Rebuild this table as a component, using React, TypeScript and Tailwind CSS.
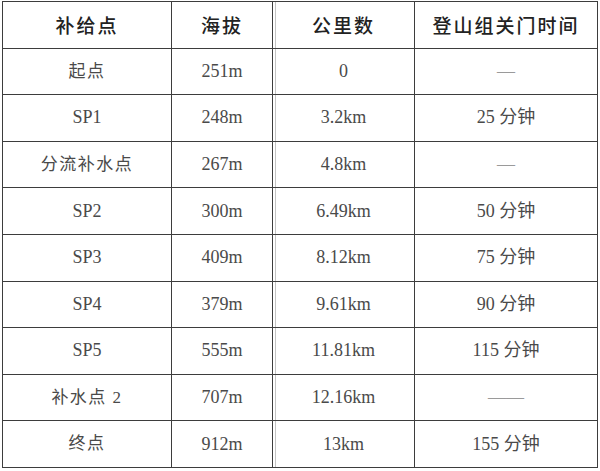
const ROWS: [string, string, string, string][] = [
  ["起点", "251m", "0", "—"],
  ["SP1", "248m", "3.2km", "25 分钟"],
  ["分流补水点", "267m", "4.8km", "—"],
  ["SP2", "300m", "6.49km", "50 分钟"],
  ["SP3", "409m", "8.12km", "75 分钟"],
  ["SP4", "379m", "9.61km", "90 分钟"],
  ["SP5", "555m", "11.81km", "115 分钟"],
  ["补水点 2", "707m", "12.16km", "——"],
  ["终点", "912m", "13km", "155 分钟"],
];

const HEADERS = ["补给点", "海拔", "公里数", "登山组关门时间"];

const cellBase = "flex items-center justify-center border-b border-r border-[#3d3d3d]";

// third column has a faint second rule just inside its left edge
const colExtra = ["", "", "shadow-[inset_2px_0_0_#fff,inset_3px_0_0_#c4c4c4]", ""];

const hasCjk = (s: string) => /[\u4e00-\u9fff]/.test(s);

export default function App() {
  return (
    <div className="h-[471px] w-[600px] overflow-hidden bg-white pl-[2px] pt-[1px]">
      <div className="grid h-[467px] w-[596px] grid-cols-[169px_101px_142px_183px] grid-rows-[repeat(10,minmax(0,1fr))] border-l border-t border-[#3d3d3d]">
        {HEADERS.map((h, i) => (
          <div
            key={h}
            className={`${cellBase} ${colExtra[i]} font-['Noto_Sans_CJK_SC',sans-serif] text-[19px] font-medium tracking-[2px] text-[#222]`}
          >
            {h}
          </div>
        ))}
        {ROWS.map((row) =>
          row.map((v, i) => (
            <div
              key={row[0] + i}
              className={`${cellBase} ${colExtra[i]} font-['Liberation_Serif','Noto_Sans_CJK_SC',serif] ${
                v.startsWith("—") ? "text-[#9a9a9a]" : "text-[#4a4a4a]"
              } ${i === 0 && hasCjk(v) ? "text-[17px] tracking-[1.5px]" : "text-[18px]"}`}
            >
              {v}
            </div>
          ))
        )}
      </div>
    </div>
  );
}
